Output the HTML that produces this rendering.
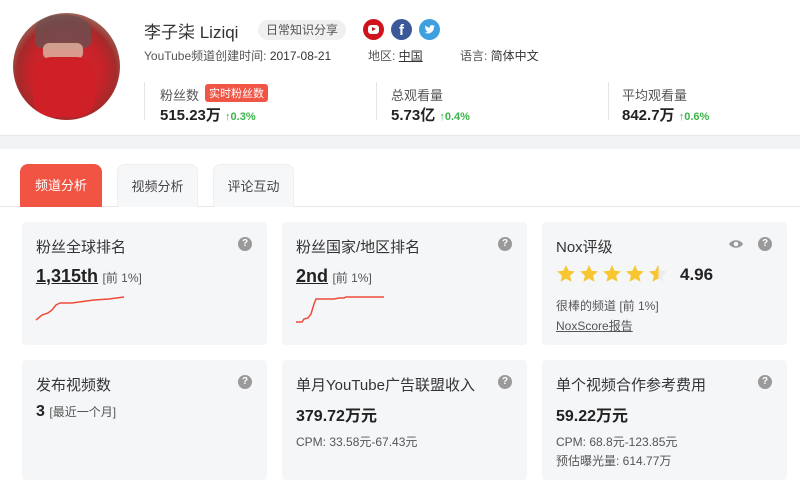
<!DOCTYPE html>
<html><head><meta charset="utf-8"><style>
*{margin:0;padding:0;box-sizing:border-box}
body{width:800px;height:488px;background:#fff;font-family:"Liberation Sans","Noto Sans CJK SC",sans-serif;color:#333;position:relative;overflow:hidden}
.a{position:absolute}
.card{position:absolute;background:#f5f6f8;border-radius:4px;width:245px}
.t{position:absolute;left:14px;top:14px;font-size:15px;color:#333}
.q{position:absolute;width:14px;height:14px;border-radius:50%;background:#9a9a9a;color:#fff;font-size:10px;font-weight:bold;text-align:center;line-height:14px}
.big{font-size:18px;font-weight:bold;color:#222}
.sm{font-size:12px;color:#555}
.up{color:#3bb54a;font-size:11px}
.lab{font-size:13px;color:#555}
.val{font-size:15px;font-weight:bold;color:#222}
</style></head><body>
<div class="a" style="left:13px;top:13px;width:107px;height:107px;border-radius:50%;background:radial-gradient(circle at 50% 55%,#d42a30 0,#c8222a 45%,#a52a2a 62%,#8a9a80 85%,#6a7a60 100%);overflow:hidden">
<div class="a" style="left:22px;top:2px;width:56px;height:34px;background:#6a5050;border-radius:45% 45% 20% 20%;opacity:.8"></div>
<div class="a" style="left:30px;top:30px;width:40px;height:16px;background:#d9a898;border-radius:6px;opacity:.9"></div>
<div class="a" style="left:20px;top:44px;width:62px;height:60px;background:#cf2028;border-radius:30%"></div>
</div>
<div class="a" style="left:144px;top:18px;font-size:17px;color:#333">李子柒 Liziqi</div>
<div class="a" style="left:258px;top:20px;height:20px;padding:0 8px;border-radius:10px;background:#f0f0f0;font-size:12px;line-height:20px;color:#555">日常知识分享</div>
<div class="a" style="left:363px;top:19px;width:21px;height:21px;border-radius:50%;background:#d0121b"><div class="a" style="left:5px;top:6px;width:11px;height:9px;border-radius:3px;background:#fff"></div><div class="a" style="left:9px;top:8px;width:0;height:0;border-left:4px solid #d0121b;border-top:2.5px solid transparent;border-bottom:2.5px solid transparent"></div></div>
<div class="a" style="left:391px;top:19px;width:21px;height:21px;border-radius:50%;background:#3b5998;color:#fff;font-weight:bold;font-size:15px;text-align:center;line-height:23px">f</div>
<svg class="a" style="left:419px;top:19px" width="21" height="21" viewBox="0 0 21 21"><circle cx="10.5" cy="10.5" r="10.5" fill="#3fa0e0"/><path d="M16 7.2c-.4.2-.8.3-1.2.3.4-.3.8-.7.9-1.2-.4.2-.9.4-1.3.5a2.1 2.1 0 0 0-3.6 1.9A6 6 0 0 1 6.4 6.5a2.1 2.1 0 0 0 .7 2.8c-.3 0-.7-.1-1-.3 0 1 .7 1.9 1.7 2.1-.3.1-.6.1-1 0 .3.8 1.1 1.5 2 1.5A4.3 4.3 0 0 1 5.6 13.5 6 6 0 0 0 14.9 8.4v-.3c.4-.3.8-.6 1.1-.9z" fill="#fff"/></svg>
<div class="a" style="left:144px;top:47px;font-size:12px;color:#555">YouTube频道创建时间: <span style="color:#333">2017-08-21</span></div>
<div class="a" style="left:368px;top:47px;font-size:12px;color:#555">地区: <span style="color:#333;text-decoration:underline">中国</span></div>
<div class="a" style="left:460px;top:47px;font-size:12px;color:#555">语言: <span style="color:#333">简体中文</span></div>
<div class="a" style="left:144px;top:82px;width:1px;height:38px;background:#e5e5e5"></div>
<div class="a" style="left:376px;top:82px;width:1px;height:38px;background:#e5e5e5"></div>
<div class="a" style="left:608px;top:82px;width:1px;height:38px;background:#e5e5e5"></div>
<div class="a lab" style="left:160px;top:85px">粉丝数</div>
<div class="a" style="left:205px;top:84px;background:#f05545;color:#fff;font-size:11px;padding:1px 4px;border-radius:3px">实时粉丝数</div>
<div class="a val" style="left:160px;top:104px">515.23万 <span class="up">↑0.3%</span></div>
<div class="a lab" style="left:391px;top:85px">总观看量</div>
<div class="a val" style="left:391px;top:104px">5.73亿 <span class="up">↑0.4%</span></div>
<div class="a lab" style="left:622px;top:85px">平均观看量</div>
<div class="a val" style="left:622px;top:104px">842.7万 <span class="up">↑0.6%</span></div>
<div class="a" style="left:0;top:135px;width:800px;height:14px;background:#f2f3f5;border-top:1px solid #e8e8e8"></div>
<div class="a" style="left:0;top:206px;width:800px;height:1px;background:#e8e8e8"></div>
<div class="a" style="left:20px;top:164px;width:82px;height:43px;background:#f25444;border-radius:8px 8px 0 0;color:#fff;font-size:13px;text-align:center;line-height:44px">频道分析</div>
<div class="a" style="left:117px;top:164px;width:81px;height:43px;background:#f6f7f9;border:1px solid #eee;border-bottom:none;border-radius:8px 8px 0 0;color:#444;font-size:13px;text-align:center;line-height:44px">视频分析</div>
<div class="a" style="left:213px;top:164px;width:81px;height:43px;background:#f6f7f9;border:1px solid #eee;border-bottom:none;border-radius:8px 8px 0 0;color:#444;font-size:13px;text-align:center;line-height:44px">评论互动</div>

<div class="card" style="left:22px;top:222px;height:123px">
<div class="t">粉丝全球排名</div><div class="q" style="left:216px;top:15px">?</div>
<div class="a" style="left:14px;top:44px"><span class="big" style="text-decoration:underline">1,315th</span> <span class="sm">[前 1%]</span></div>
<svg class="a" style="left:12px;top:70px" width="110" height="32"><polyline fill="none" stroke="#f04a3a" stroke-width="1.5" points="2,28 8,23 14,21 18,18 22,13 26,11 38,11 45,10 60,8 75,7 90,5"/></svg>
</div>
<div class="card" style="left:282px;top:222px;height:123px">
<div class="t">粉丝国家/地区排名</div><div class="q" style="left:216px;top:15px">?</div>
<div class="a" style="left:14px;top:44px"><span class="big" style="text-decoration:underline">2nd</span> <span class="sm">[前 1%]</span></div>
<svg class="a" style="left:12px;top:70px" width="110" height="32"><polyline fill="none" stroke="#f04a3a" stroke-width="1.5" points="2,30 8,30 10,27 14,26 17,22 20,12 22,7 40,7 45,6 50,6 52,5 90,5"/></svg>
</div>
<div class="card" style="left:542px;top:222px;height:123px">
<div class="t">Nox评级</div>
<svg class="a" style="left:186px;top:17px" width="16" height="10" viewBox="0 0 16 10"><path d="M1 5C4 0 12 0 15 5C12 10 4 10 1 5z" fill="#999"/><circle cx="8" cy="5" r="2.3" fill="#f5f6f8"/></svg>
<div class="q" style="left:216px;top:15px">?</div>
<svg class="a" style="left:14px;top:42px" width="112" height="20" viewBox="0 0 112 20">
<defs><path id="s" d="M10 1l2.6 5.8 6.3.6-4.8 4.2 1.4 6.2L10 14.6 4.5 17.8l1.4-6.2L1.1 7.4l6.3-.6z"/><clipPath id="h"><rect x="0" y="0" width="10.5" height="20"/></clipPath></defs>
<use href="#s" fill="#f8c630"/><use href="#s" x="23" fill="#f8c630"/><use href="#s" x="46" fill="#f8c630"/><use href="#s" x="69" fill="#f8c630"/>
<g transform="translate(92 0)"><use href="#s" fill="#ebebeb"/><use href="#s" fill="#f8c630" clip-path="url(#h)"/></g>
</svg>
<div class="a" style="left:138px;top:43px;font-size:17px;font-weight:bold;color:#222">4.96</div>
<div class="a sm" style="left:14px;top:75px">很棒的频道 [前 1%]</div>
<div class="a sm" style="left:14px;top:95px;text-decoration:underline">NoxScore报告</div>
</div>
<div class="card" style="left:22px;top:360px;height:120px">
<div class="t">发布视频数</div><div class="q" style="left:216px;top:15px">?</div>
<div class="a" style="left:14px;top:43px"><span class="big" style="font-size:16px">3</span> <span class="sm">[最近一个月]</span></div>
</div>
<div class="card" style="left:282px;top:360px;height:120px">
<div class="t">单月YouTube广告联盟收入</div><div class="q" style="left:216px;top:15px">?</div>
<div class="a big" style="left:14px;top:42px;font-size:16px">379.72万元</div>
<div class="a sm" style="left:14px;top:73px">CPM: 33.58元-67.43元</div>
</div>
<div class="card" style="left:542px;top:360px;height:120px">
<div class="t">单个视频合作参考费用</div><div class="q" style="left:216px;top:15px">?</div>
<div class="a big" style="left:14px;top:42px;font-size:16px">59.22万元</div>
<div class="a sm" style="left:14px;top:73px">CPM: 68.8元-123.85元</div>
<div class="a sm" style="left:14px;top:92px">预估曝光量: 614.77万</div>
</div>
</body></html>
